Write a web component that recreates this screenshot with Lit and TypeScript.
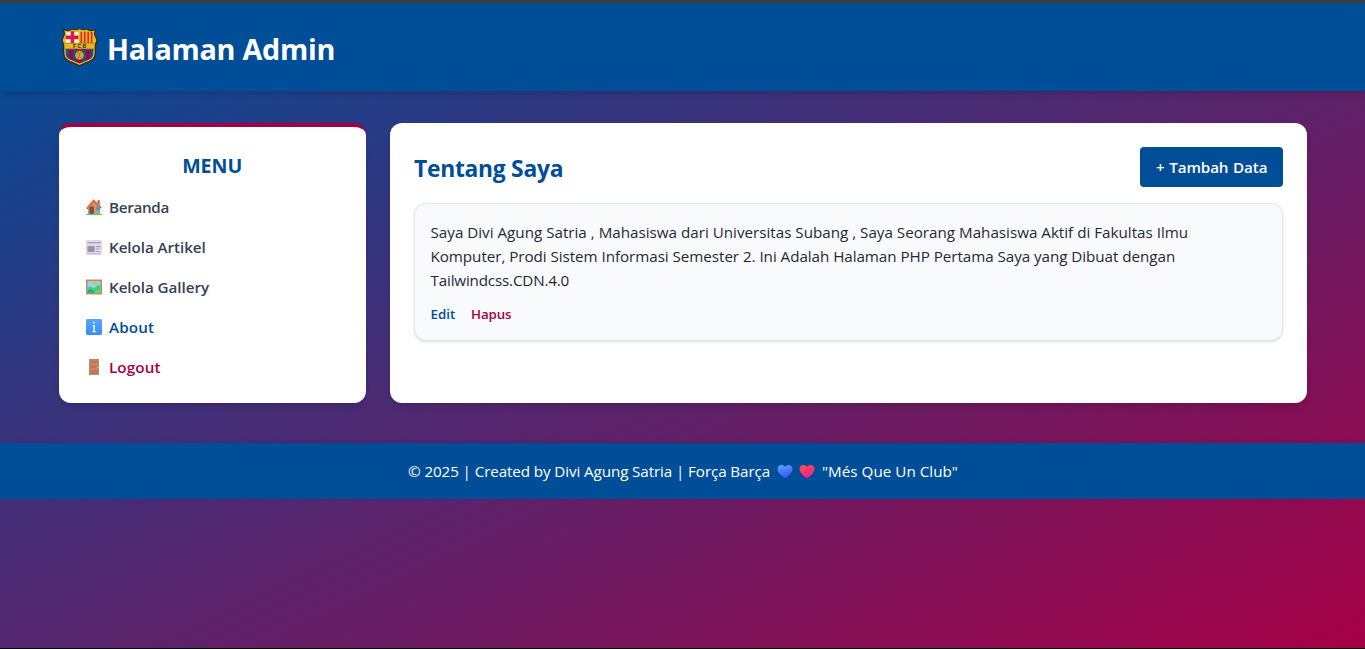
import { LitElement, html, css, svg } from "lit";
import { customElement } from "lit/decorators.js";

const icons = {
  home: svg`<path d="M3 9.500 9.500 3l5.500 6v7.500H3z" fill="#c98a55"/><path d="M9.500 4l5 5v7.500h-5z" fill="#d69a64"/><path d="M12.500 2.200h2.200v5.300l-2.200-2z" fill="#d9503a"/><path d="M1 10.300 8.500 1.300l8.300 8.200-1.100 1.300-6.500-6.300-6.700 7z" fill="#ea6045"/><path d="M3 10.200 8.800 4.300 10.500 6v10.500H3z" fill="#d2935f"/><path d="M4.600 9.500q0-1 1-1h2.200q1 0 1 1v7H4.600z" fill="#7c4b43"/><path d="M11 8.500h3.700v4H11z" fill="#31a4e8"/><path d="M1 15.800h16v1.200H1z" fill="#41d98a"/>`,
  news: svg`<rect x="1" y="2" width="16" height="14.500" rx="1.200" fill="#ded8e8"/><path d="M2.500 4h13v1.300h-13z" fill="#a99fb5"/><rect x="2.500" y="8" width="7" height="6" rx=".7" fill="#9b90a8"/><path d="M10.800 8h4.700v1.200h-4.700zM10.800 10.500h3.600v1.100h-3.600zM10.800 13h4v1h-4z" fill="#aca3ba"/><path d="M2 15.500h14v1H2z" fill="#c7a8df"/>`,
  gallery: svg`<path d="M1 1.500h16v15H1z" fill="#c48b61"/><path d="M2.600 3.200h12.800v11.600H2.600z" fill="#89d9f5"/><circle cx="10.200" cy="5.500" r="1.900" fill="#ffb438"/><path d="M2.600 9.500 6 8.500l3 2 3.500-3.500 2.900 1v6.800H2.600z" fill="#3bd17e"/><path d="M2.600 12.500c3-2 6-1 7 2.300h-7z" fill="#1da98c"/><path d="m9 14.800 6.400-4v4z" fill="#62dc70"/>`,
  info: svg`<defs><linearGradient id="info-fill" x2="0" y2="1"><stop stop-color="#5aa5fb"/><stop offset="1" stop-color="#3a8cf2"/></linearGradient></defs><rect x="1" y="1" width="16" height="16" rx="1.400" fill="url(#info-fill)"/><path d="M8.200 3.800h1.700v1.700H8.200zM7.300 7h2.600v6.200h1.300v1.100H7v-1.100h1.300V8.100h-1z" fill="#e0f0ff"/>`,
  door: svg`<path d="M4 1h10v16H4z" fill="#c58560"/><path d="M5.500 2.500h7v3h-7zM5.500 7h7v3.500h-7zM5.500 12h7v3.500h-7z" fill="#bd7856"/><path d="M5.500 6.200h7M5.500 11.200h7" stroke="#cf936d" stroke-width=".8"/><circle cx="12.500" cy="9.300" r=".8" fill="#f2bd62"/>`,
};

const crest = svg`
  <path d="M4 3q5 2.500 8.500 0 3.500 1.500 7.500 0 4 1.500 7.500 0 3.500 2.500 8.500 0l.5 1-1.300 4.500L38 14l-1.500 5v8q-.5 7.500-9 9.500L20 40l-7.500-3.500q-8.500-2-9-9.500v-8L2 14l2.800-5.500L3.500 4z" fill="#282d2a"/>
  <path d="M5 4.500q4.500 2 7.500-.5 3.500 1 7.500-.5 4 1.500 7.500.5 3 2.500 7.500.5l-.8 4L36.700 14 35 19v8.500q-.5 6-8.500 8L20 38.500l-6.500-3q-8-2-8.500-8V19l-1.700-5 2.500-5.500z" fill="#edbd13"/>
  <path d="M7 6.500h12V17H7l-1-3 1.500-5z" fill="#fff"/>
  <path d="M11.300 5.500h3.500v11.500h-3.500z" fill="#e4173e"/><path d="M6.500 9.700H19v3.500H6.300z" fill="#e4173e"/>
  <path d="M21.800 6v11M25.200 6v11M28.600 6v11M32 6v11" stroke="#d8243a" stroke-width="1.600"/>
  <path d="M5.500 17.500h29v5h-29z" fill="#e6b819"/>
  <path d="M5 17.200h30M5 22.800h30" stroke="#6c5722" stroke-width=".5"/>
  <text class="crest-text" x="20.700" y="22.100" text-anchor="middle">FCB</text>
  <path d="M6.500 23h27v5q-.5 4.500-7 6.300L20 37l-6.500-2.700Q7 32.500 6.500 28z" fill="#a50044"/>
  <path d="M6.500 23h3.300v9.500q-3-2-3.300-4.500zM13.500 23h4v12.700l-4-1.600zM22.500 23h4v11.300l-4 1.600zM30.200 23h3.300v5q-.3 2.500-3.300 4.500z" fill="#174e96"/>
  <circle cx="20" cy="29" r="4.300" fill="#d5a321"/><path d="m18 26 2 1.500 2-1.500M18 32l2-2 2 2M20 27.500V30" fill="none" stroke="#8e6b21" stroke-width=".6"/>`;

const heart = (id: string, top: string, bottom: string) => html`
  <svg class="heart" viewBox="0 0 16 16" aria-hidden="true">
    <defs><linearGradient id=${id} x2=".4" y2="1"><stop stop-color=${top}></stop><stop offset="1" stop-color=${bottom}></stop></linearGradient></defs>
    <path d="M8 15.200C6 14 0 9.800 0 5.300 0 1 5.500-.5 8 3c2.500-3.500 8-2 8 2.300 0 4.500-6 8.700-8 9.900z" fill="url(#${id})"/>
  </svg>`;

const menu = [
  { icon: icons.home, label: "Beranda", cls: "t-home" },
  { icon: icons.news, label: "Kelola Artikel", cls: "t-kelola" },
  { icon: icons.gallery, label: "Kelola Gallery", cls: "t-kelola" },
  { icon: icons.info, label: "About", cls: "active" },
  { icon: icons.door, label: "Logout", cls: "danger" },
];

@customElement("app-root")
export class AppRoot extends LitElement {
  static styles = css`
    :host {
      display: flex;
      flex-direction: column;
      box-sizing: border-box;
      height: 649px;
      border-top: 3px solid #3d3d3d;
      border-bottom: 1px solid #000;
      background: linear-gradient(to bottom right, #004d98, #a50044) padding-box;
      font: 400 15.2px/24px "Open Sans", "Noto Sans", sans-serif;
      color: #1e2939;
    }
    *, *::before, *::after { box-sizing: border-box; }
    h1, h2, p, ul { margin: 0; padding: 0; }
    a { color: inherit; text-decoration: none; }
    svg { display: block; flex: none; }
    header {
      height: 88px;
      padding: 0 58.5px;
      display: flex;
      align-items: center;
      gap: 8px;
      background: #004d98;
      color: #fff;
      box-shadow: 0 4px 6px -1px #0000001a, 0 2px 4px -2px #0000001a;
    }
    .crest { width: 37px; height: 39px; margin: 0 1px 0 2.500px; }
    .crest-text { font: 700 5px "Liberation Sans", sans-serif; letter-spacing: 1.4px; fill: #222; }
    h1 { font-size: 28.8px; line-height: 36px; letter-spacing: -.28px; padding-top: 3px; }
    .layout {
      display: flex;
      gap: 24px;
      padding: 32px 58.5px 40px;
    }
    .card {
      background: #fff;
      border-radius: 12px;
      padding: 24px;
      height: 280px;
      box-shadow: 0 4px 6px -1px #0000001a, 0 2px 4px -2px #0000001a;
    }
    aside { flex: 0 0 307.5px; border-top: 4px solid #a50044; }
    main { flex: 1; }
    aside h2 { font-size: 19.6px; line-height: 28px; text-align: center; color: #004d98; padding-top: 1px; }
    ul { list-style: none; margin-top: 15px; display: grid; gap: 16px; color: #364153; font-weight: 600; }
    li a { display: flex; align-items: center; gap: 6px; padding-left: 2.5px; height: 24px; }
    li svg { width: 18px; height: 18px; }
    .t-home { letter-spacing: -.3px; }
    .t-kelola { letter-spacing: -.05px; }
    .active { color: #004d98; letter-spacing: .12px; }
    .danger { color: #a50044; letter-spacing: .12px; }
    .title-row { display: flex; justify-content: space-between; align-items: center; height: 40px; }
    .title-row h2 { font-size: 22.8px; line-height: 32px; color: #004d98; letter-spacing: -.25px; padding-top: 3px; }
    .add {
      width: 143px;
      height: 40px;
      padding: 8px 0 8px 16.500px;
      border-radius: 4px;
      background: #004d98;
      color: #fff;
      font-weight: 600;
      letter-spacing: -.1px;
      word-spacing: .8px;
      white-space: nowrap;
    }
    article {
      margin-top: 16px;
      height: 138px;
      padding: 16px 15.500px;
      border: 1px solid #e5e7eb;
      border-radius: 12px;
      background: #f9fafb;
      box-shadow: 0 1px 3px #0000001a, 0 1px 2px -1px #0000001a;
    }
    .line { display: block; white-space: nowrap; }
    .l2 { letter-spacing: -.045px; }
    .l3 { letter-spacing: -.17px; }
    .actions { display: flex; gap: 16px; margin-top: 12px; font-size: 13.3px; line-height: 20px; font-weight: 600; }
    .edit { color: #004d98; width: 24.500px; }
    .hapus { color: #a50044; letter-spacing: -.1px; }
    footer {
      height: 56px;
      display: flex;
      align-items: center;
      justify-content: center;
      padding-left: 1px;
      background: #004d98;
      color: #fff;
      white-space: pre;
      box-shadow: 0 -1px 3px #0000001a;
    }
    .credit { letter-spacing: -.1px; margin-right: 7px; }
    .heart { width: 16px; height: 15px; margin-right: 6px; }
    .motto { letter-spacing: .03px; margin-left: 1px; }
  `;

  render() {
    return html`
      <header>
        <svg class="crest" viewBox="1.700 2.300 36.600 38.200" preserveAspectRatio="none" aria-hidden="true">${crest}</svg>
        <h1>Halaman Admin</h1>
      </header>
      <div class="layout">
        <aside class="card">
          <h2>MENU</h2>
          <ul>
            ${menu.map((m) => html`<li><a class=${m.cls} href="#"><svg viewBox="0 0 18 18" aria-hidden="true">${m.icon}</svg><span>${m.label}</span></a></li>`)}
          </ul>
        </aside>
        <main class="card">
          <div class="title-row">
            <h2>Tentang Saya</h2>
            <a class="add" href="#">+ Tambah Data</a>
          </div>
          <article>
            <p>
              <span class="line">Saya Divi Agung Satria , Mahasiswa dari Universitas Subang , Saya Seorang Mahasiswa Aktif di Fakultas Ilmu</span>
              <span class="line l2">Komputer, Prodi Sistem Informasi Semester 2. Ini Adalah Halaman PHP Pertama Saya yang Dibuat dengan</span>
              <span class="line l3">Tailwindcss.CDN.4.0</span>
            </p>
            <div class="actions"><a class="edit" href="#">Edit</a><a class="hapus" href="#">Hapus</a></div>
          </article>
        </main>
      </div>
      <footer><span class="credit">© 2025 | Created by Divi Agung Satria | Força Barça</span>${heart("blue", "#63a4ff", "#3558f5")}${heart("red", "#ff5148", "#f4228b")}<span class="motto">"Més Que Un Club"</span></footer>
    `;
  }
}
